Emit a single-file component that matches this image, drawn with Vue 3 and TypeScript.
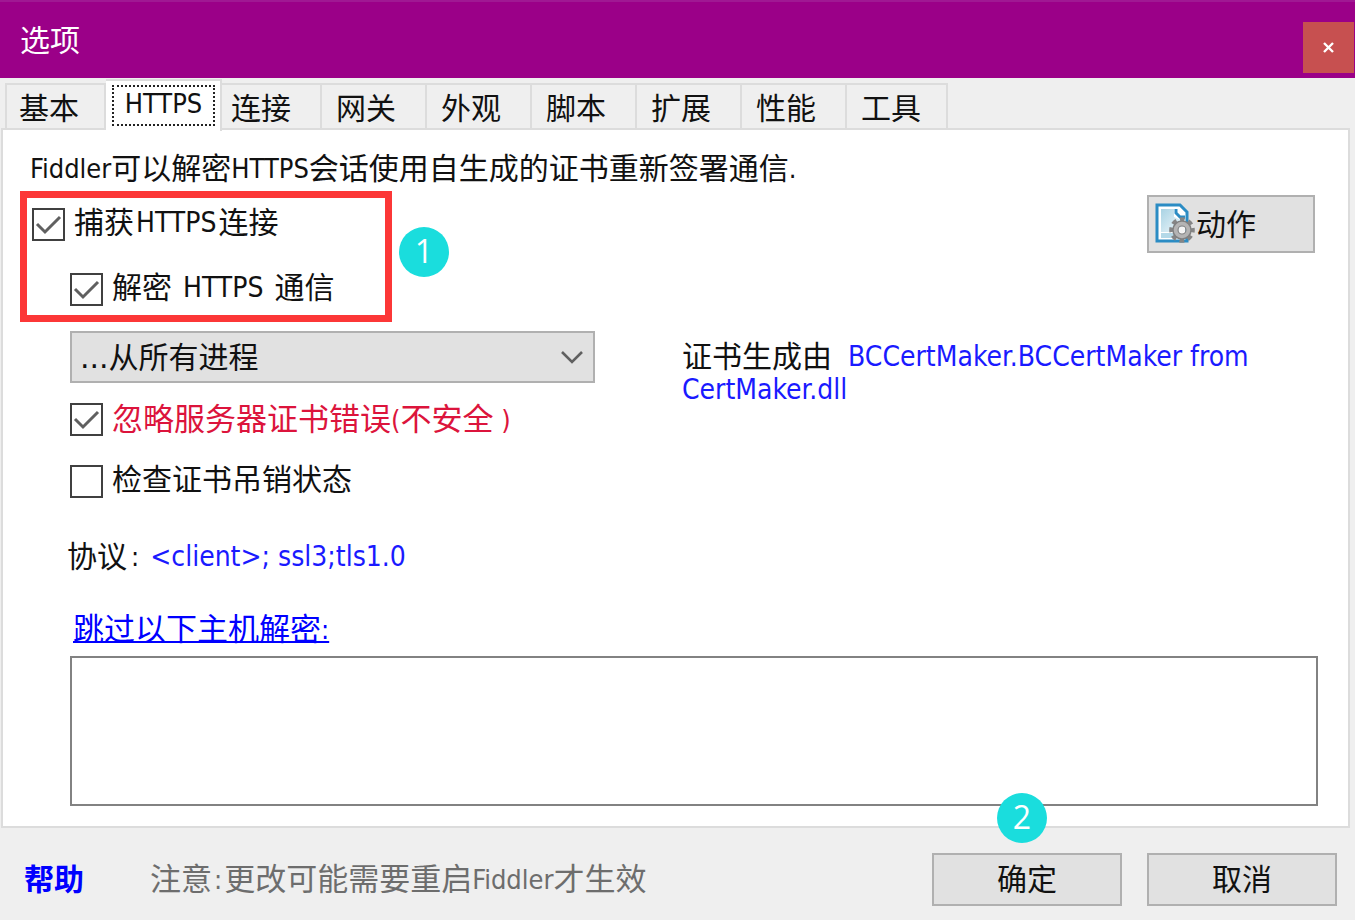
<script setup lang="ts">
import { ref } from 'vue'

const tabs = ['基本', 'HTTPS', '连接', '网关', '外观', '脚本', '扩展', '性能', '工具']
const activeTab = ref('HTTPS')

const capture = ref(true)
const decrypt = ref(true)
const ignoreErrors = ref(true)
const checkRevocation = ref(false)
const processScope = ref('all')
const skipHosts = ref('')
</script>

<template>
  <main class="dialog">
    <header class="titlebar">
      <h1 class="title">选项</h1>
      <button class="close" type="button" aria-label="关闭">
        <svg width="13" height="11" viewBox="0 0 13 11">
          <path d="M2 1L11 10M11 1L2 10" stroke="#fff" stroke-width="2.4" fill="none" />
        </svg>
      </button>
    </header>

    <nav class="tabs" role="tablist">
      <button
        v-for="tab in tabs"
        :key="tab"
        type="button"
        role="tab"
        class="tab"
        :class="{ active: tab === activeTab }"
        :aria-selected="tab === activeTab"
        @click="activeTab = tab"
      >
        <span class="tab-label">{{ tab }}</span>
      </button>
    </nav>

    <section class="panel">
      <p class="intro">
        <span class="latin">Fiddler</span>可以解密<span class="latin">HTTPS</span>会话使用自生成的证书重新签署通信<span class="latin">.</span>
      </p>

      <div class="top-row">
        <div class="highlight">
          <label class="check">
            <span class="box">
              <input v-model="capture" type="checkbox" />
              <svg v-if="capture" viewBox="0 0 33 33"><path d="M5 16L13 24L28 9" /></svg>
            </span>
            <span class="text">捕获<span class="latin large snug">HTTPS</span>连接</span>
          </label>
          <label class="check nested">
            <span class="box">
              <input v-model="decrypt" type="checkbox" />
              <svg v-if="decrypt" viewBox="0 0 33 33"><path d="M5 16L13 24L28 9" /></svg>
            </span>
            <span class="text">解密<span class="latin large spaced">HTTPS</span>通信</span>
          </label>
          <span class="badge badge-one">1</span>
        </div>

        <button class="button action" type="button">
          <svg class="action-icon" width="42" height="42" viewBox="0 0 42 42">
            <defs>
              <linearGradient id="sheet" x1="0" y1="0" x2="1" y2="1">
                <stop offset="0" stop-color="#a9d3e4" />
                <stop offset="1" stop-color="#f0f8fb" />
              </linearGradient>
            </defs>
            <path d="M3 2H26L33 9V38H3Z" fill="#fff" stroke="#2b8cc4" stroke-width="3" />
            <path d="M7 6H20V14L29 18V29H7Z" fill="url(#sheet)" />
            <path d="M7 30H20V35H7Z" fill="#b4d9e8" />
            <path d="M22 6V10L26 14H31" fill="none" stroke="#2b8cc4" stroke-width="3" />
            <circle cx="28" cy="27" r="10.4" fill="none" stroke="#858585" stroke-width="4.8" stroke-dasharray="4.6 3.568" stroke-dashoffset="2.3" />
            <circle cx="28" cy="27" r="6.6" fill="none" stroke="#808080" stroke-width="6.4" />
            <circle cx="28" cy="27" r="6.4" fill="none" stroke="#b4b4b4" stroke-width="3.8" />
            <circle cx="28" cy="27" r="3" fill="#f4f4f4" />
          </svg>
          <span class="caption">动作</span>
        </button>
      </div>

      <div class="options">
        <div class="option-list">
          <div class="select-wrap">
            <select v-model="processScope" aria-label="进程">
              <option value="all">...从所有进程</option>
            </select>
            <svg class="chevron" width="24" height="14" viewBox="0 0 24 14">
              <path d="M2 2L12 12L22 2" stroke="#606060" stroke-width="2.6" fill="none" />
            </svg>
          </div>
          <label class="check warn">
            <span class="box">
              <input v-model="ignoreErrors" type="checkbox" />
              <svg v-if="ignoreErrors" viewBox="0 0 33 33"><path d="M5 16L13 24L28 9" /></svg>
            </span>
            <span class="text">忽略服务器证书错误<span class="latin">(</span>不安全<span class="latin"> )</span></span>
          </label>
          <label class="check">
            <span class="box">
              <input v-model="checkRevocation" type="checkbox" />
              <svg v-if="checkRevocation" viewBox="0 0 33 33"><path d="M5 16L13 24L28 9" /></svg>
            </span>
            <span class="text">检查证书吊销状态</span>
          </label>
        </div>
        <p class="cert">
          <span>证书生成由</span>
          <a href="#"><span class="latin large maker">BCCertMaker.BCCertMaker from</span> <span class="latin large">CertMaker.dll</span></a>
        </p>
      </div>

      <p class="protocols">协议<span class="latin colon">:</span><a class="latin large" href="#">&lt;client&gt;; ssl3;tls1.0</a></p>

      <div class="skip">
        <label class="skip-label" for="skip-hosts">跳过以下主机解密<span class="latin">:</span></label>
        <textarea id="skip-hosts" v-model="skipHosts"></textarea>
      </div>
    </section>

    <footer class="footer">
      <a class="help" href="#">帮助</a>
      <p class="note">注意<span class="latin snug">:</span>更改可能需要重启<span class="latin">Fiddler</span>才生效</p>
      <div class="confirm">
        <button class="button wide" type="button">确定</button>
        <span class="badge badge-two">2</span>
      </div>
      <button class="button wide" type="button">取消</button>
    </footer>
  </main>
</template>

<style>
body {
  margin: 0;
  background: #efefef;
}
</style>

<style scoped>
.dialog {
  display: flex;
  flex-direction: column;
  min-height: 100vh;
  box-sizing: border-box;
  background: #efefef;
  color: #111;
  font-family: "Noto Sans CJK SC", "Noto Sans", sans-serif;
  font-size: 30px;
  line-height: 34px;
}

.dialog *,
.dialog *::before {
  box-sizing: border-box;
}

p,
h1 {
  margin: 0;
}

button,
select,
textarea,
input {
  margin: 0;
  font: inherit;
  color: inherit;
}

.latin {
  font-family: "DejaVu Sans Condensed", "DejaVu Sans", sans-serif;
  font-size: 27px;
  line-height: 1;
  vertical-align: 1px;
}

.large {
  font-size: 28px;
}

a {
  color: #1a1aff;
  text-decoration: none;
}

.titlebar {
  display: flex;
  justify-content: space-between;
  align-items: flex-start;
  height: 78px;
  padding: 20px 1px 0 20px;
  border-top: 2px solid #a01893;
  background: #9b0088;
  color: #fff;
}

.title {
  font-size: 30px;
  font-weight: 400;
  line-height: 32px;
}

.close {
  display: flex;
  align-items: center;
  justify-content: center;
  width: 51px;
  height: 51px;
  padding: 0;
  border: 0;
  background: #c75050;
}

.tabs {
  display: flex;
  align-items: flex-end;
  height: 50px;
  padding-left: 5px;
}

.tab {
  width: 105px;
  height: 45px;
  padding: 0 0 2px 14px;
  border: 2px solid #dcdcdc;
  border-width: 2px 2px 0 0;
  background: #efefef;
  text-align: left;
  line-height: 40px;
}

.tab:first-child {
  width: 101px;
  padding-left: 12px;
  border-left-width: 2px;
}

.tab:last-child {
  width: 101px;
}

.tab.active {
  width: 116px;
  height: 52px;
  margin-bottom: -3px;
  padding: 4px 5px 5px 6px;
  background: #fff;
  z-index: 1;
}

.active .tab-label {
  display: block;
  height: 41px;
  border: 2px dotted #222;
  font-family: "DejaVu Sans Condensed", "DejaVu Sans", sans-serif;
  font-size: 27px;
  line-height: 34px;
  text-align: center;
}

.tab.active + .tab {
  width: 100px;
  padding-left: 9px;
}

.panel {
  display: flex;
  flex: 1;
  flex-direction: column;
  margin: 0 5px 0 1px;
  padding: 16px 30px 20px 67px;
  border: 2px solid #dcdcdc;
  background: #fff;
}

.intro {
  margin-left: -40px;
  height: 45px;
  line-height: 40px;
}

.top-row {
  display: flex;
  justify-content: space-between;
  align-items: flex-start;
  margin-right: 3px;
  margin-left: -50px;
}

.highlight {
  position: relative;
  display: flex;
  flex-direction: column;
  gap: 32px;
  width: 372px;
  padding: 10px 5px 9px;
  border: 7px solid #fc3737;
}

.check {
  display: flex;
  gap: 9px;
  height: 33px;
}

.nested {
  margin-left: 38px;
}

.box {
  display: grid;
  flex: none;
  width: 33px;
  height: 33px;
}

.box input,
.box svg {
  grid-area: 1 / 1;
  width: 33px;
  height: 33px;
}

.box input {
  appearance: none;
  border: 2px solid #404040;
  background: #fff;
}

.box svg {
  pointer-events: none;
}

.box path {
  fill: none;
  stroke: #606060;
  stroke-width: 3;
}

.text {
  line-height: 24px;
  white-space: nowrap;
}

.snug {
  margin: 0 2px;
}

.spaced {
  margin: 0 11px;
}

.badge {
  position: absolute;
  width: 50px;
  height: 50px;
  border-radius: 50%;
  background: #1adddd;
  color: #fff;
  font-family: "Open Sans", sans-serif;
  font-size: 32px;
  line-height: 48px;
  text-align: center;
}

.badge-one {
  top: 29px;
  right: -64px;
}

.badge-two {
  top: -60px;
  left: 65px;
}

.button {
  padding: 0 0 5px;
  border: 2px solid #b0b0b0;
  background: #e1e1e1;
}

.action {
  display: flex;
  align-items: center;
  width: 168px;
  height: 58px;
  margin-top: 4px;
  padding: 0 0 0 5px;
}

.caption {
  padding-bottom: 5px;
}

.options {
  display: flex;
  gap: 87px;
  margin-top: 9px;
}

.option-list {
  flex: 0 0 525px;
}

.select-wrap {
  display: grid;
  align-items: center;
  margin-bottom: 20px;
}

.select-wrap > * {
  grid-area: 1 / 1;
}

select {
  appearance: none;
  width: 100%;
  height: 52px;
  padding: 2px 50px 0 8px;
  border: 2px solid #b0b0b0;
  border-radius: 0;
  background: #e1e1e1;
  font-family: "DejaVu Sans", "Noto Sans CJK SC", sans-serif;
}

.chevron {
  justify-self: end;
  margin-right: 11px;
  pointer-events: none;
}

.warn {
  margin-bottom: 29px;
  color: #dc143c;
  font-size: 31px;
}

.warn .text {
  line-height: 28px;
}

.cert {
  flex: 1;
  padding-top: 7px;
  line-height: 32px;
}

.maker {
  margin-left: 16px;
}

.protocols {
  height: 40px;
  margin-top: 39px;
  margin-left: -3px;
}

.colon {
  margin: 0 11px 0 4px;
}

.skip {
  display: flex;
  flex: 1;
  flex-direction: column;
  align-items: flex-start;
  margin-top: 33px;
}

.skip-label {
  height: 46px;
  margin-left: 3px;
  color: #0000ff;
  font-size: 31px;
  text-decoration: underline;
  text-decoration-thickness: 2px;
}

textarea {
  flex: 1;
  width: 100%;
  min-height: 150px;
  padding: 8px;
  border: 2px solid #828282;
  border-radius: 0;
  background: #fff;
  resize: none;
}

.footer {
  display: flex;
  align-items: center;
  gap: 25px;
  padding: 25px 18px 14px 24px;
}

.help {
  margin-right: 41px;
  padding-bottom: 5px;
  color: #0000ff;
  font-weight: 700;
}

.note {
  flex: 1;
  padding-bottom: 5px;
  color: #6d6d6d;
  font-size: 31px;
  white-space: nowrap;
}

.confirm {
  position: relative;
}

.wide {
  display: block;
  width: 190px;
  height: 53px;
}
</style>
